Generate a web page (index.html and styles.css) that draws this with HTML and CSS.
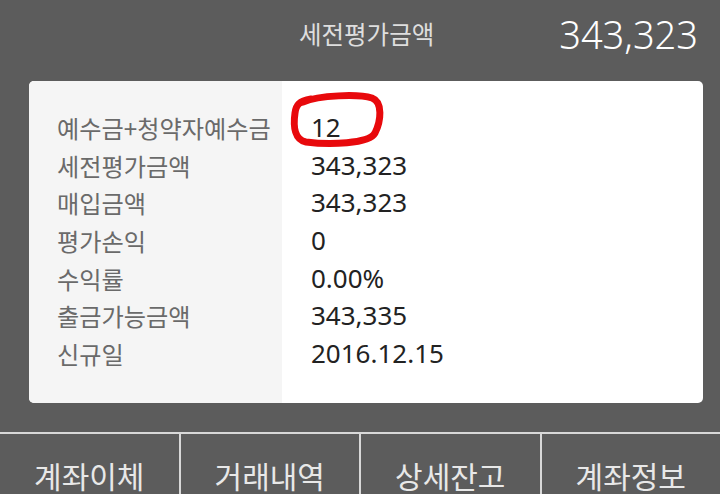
FILE: index.html
```html
<!DOCTYPE html>
<html lang="ko">

<head>
    <meta charset="UTF-8">
    <title>계좌 잔고</title>
    <link rel="stylesheet" href="styles.css">
</head>

<body>
    <!-- Header -->
    <div class="header">
        <span class="header-title">세전평가금액</span>
        <span class="header-value">343,323</span>
    </div>

    <!-- Account summary card -->
    <div class="card">
        <div class="card-labels">
            <div class="row">예수금+청약자예수금</div>
            <div class="row">세전평가금액</div>
            <div class="row">매입금액</div>
            <div class="row">평가손익</div>
            <div class="row">수익률</div>
            <div class="row">출금가능금액</div>
            <div class="row">신규일</div>
        </div>
        <div class="card-values">
            <div class="row">12</div>
            <div class="row">343,323</div>
            <div class="row">343,323</div>
            <div class="row">0</div>
            <div class="row">0.00%</div>
            <div class="row">343,335</div>
            <div class="row">2016.12.15</div>
        </div>

        <!-- Hand drawn mark -->
        <svg class="mark" viewBox="0 0 100 60" width="100" height="60">
            <path d="M14 11 C30 4, 70 3, 83 7 C94 11, 92 30, 86 42 C80 53, 40 54, 17 51 C6 49, 4 36, 6 22 C7 14, 10 10, 22 8"
                fill="none" stroke="#e8090c" stroke-width="7" stroke-linecap="round" stroke-linejoin="round" />
        </svg>
    </div>

    <!-- Bottom menu -->
    <div class="menu">
        <div class="menu-item">계좌이체</div>
        <div class="menu-item">거래내역</div>
        <div class="menu-item">상세잔고</div>
        <div class="menu-item">계좌정보</div>
    </div>
</body>

</html>
```

FILE: styles.css
```css
* {
    margin: 0;
    padding: 0;
    box-sizing: border-box;
}

body {
    width: 720px;
    height: 494px;
    overflow: hidden;
    background: #5c5c5c;
    font-family: "Noto Sans CJK KR", "Noto Sans", sans-serif;
}

/* Header */
.header {
    height: 81px;
    display: flex;
    align-items: center;
    padding: 0 22px 14px 299px;
}

.header-title {
    color: #dedede;
    font-size: 24.5px;
}

.header-value {
    margin-left: auto;
    color: #ffffff;
    font-size: 38px;
    font-weight: 300;
    font-family: "Noto Sans", sans-serif;
}

/* Card */
.card {
    position: relative;
    margin-left: 29px;
    width: 674px;
    height: 322px;
    background: #ffffff;
    border-radius: 5px;
    display: flex;
    overflow: hidden;
}

.card-labels {
    width: 253px;
    background: #f5f5f5;
    padding: 28px 0 0 28px;
    color: #6a6a6a;
    font-size: 24.2px;
}

.card-values {
    padding: 28px 0 0 29px;
    color: #222222;
    font-size: 26px;
    font-family: "Noto Sans", sans-serif;
}

.row {
    height: 37.7px;
    line-height: 37.7px;
    white-space: nowrap;
}

.mark {
    position: absolute;
    left: 260px;
    top: 10px;
}

/* Bottom menu */
.menu {
    margin-top: 29px;
    height: 84px;
    border-top: 2px solid #d8d8d8;
    display: flex;
}

.menu-item {
    flex: 1;
    display: flex;
    align-items: center;
    justify-content: center;
    color: #e8e8e8;
    font-size: 30px;
    border-left: 2px solid #d8d8d8;
}

.menu-item:first-child {
    border-left: none;
}
```
